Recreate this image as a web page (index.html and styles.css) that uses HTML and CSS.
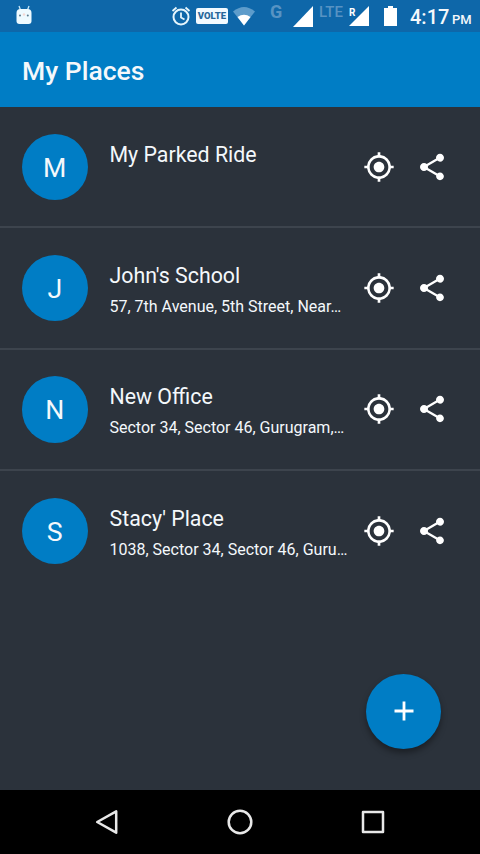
FILE: index.html
```html
<!DOCTYPE html>
<html lang="en">
<head>
<meta charset="utf-8">
<title>My Places</title>
<link rel="stylesheet" href="styles.css">
</head>
<body>
<svg class="defs" width="0" height="0">
  <symbol id="locate" viewBox="0 0 24 24"><path d="M12 8c-2.21 0-4 1.79-4 4s1.79 4 4 4 4-1.790 4-4-1.790-4-4-4zm8.940 3A8.994 8.994 0 0 0 13 3.060V1h-2v2.060A8.994 8.994 0 0 0 3.060 11H1v2h2.060A8.994 8.994 0 0 0 11 20.940V23h2v-2.060A8.994 8.994 0 0 0 20.940 13H23v-2h-2.060zM12 19c-3.870 0-7-3.130-7-7s3.130-7 7-7 7 3.130 7 7-3.130 7-7 7z"/></symbol>
  <symbol id="share" viewBox="0 0 24 24"><path d="M18 16.080c-.76 0-1.440.3-1.960.77L8.910 12.700c.05-.23.09-.46.09-.7s-.04-.47-.09-.7l7.050-4.110c.54.5 1.250.81 2.040.81 1.660 0 3-1.340 3-3s-1.340-3-3-3-3 1.340-3 3c0 .24.04.47.09.7L8.040 9.810C7.500 9.310 6.790 9 6 9c-1.660 0-3 1.340-3 3s1.340 3 3 3c.79 0 1.500-.31 2.040-.81l7.120 4.160c-.05.21-.08.43-.08.65 0 1.610 1.310 2.920 2.920 2.920s2.920-1.310 2.920-2.920-1.310-2.920-2.920-2.920z"/></symbol>
</svg>
<div class="screen">
  <div class="status">
    <svg class="robot" width="18" height="20" viewBox="0 0 18 20"><path d="M4 1l1.500 4M14 1l-1.500 4" stroke="#c4e6f7" stroke-width="1.300"/><path d="M1.500 8q0-4 4-4h7q4 0 4 4v8q0 3-3 3h-9q-3 0-3-3z" fill="#eefaff"/><circle cx="5" cy="10.500" r="1" fill="#58798c"/><circle cx="12.800" cy="10.500" r="1" fill="#58798c"/><circle cx="9" cy="9.500" r="1.200" fill="#f5d9d4"/></svg>
    <svg class="alarm" width="20" height="20" viewBox="0 0 20 20" fill="none" stroke="#e5f5fc" stroke-width="2"><circle cx="10" cy="11" r="7.500"/><path d="M1.500 5l4-3.500M18.500 5l-4-3.500M10 6.500v5l3.500 2" stroke-width="1.800"/></svg>
    <span class="volte">VOLTE</span>
    <svg class="wifi" width="24" height="20" viewBox="0 0 24 20"><path d="M1 5.500Q12-3.500 23 5.500L12 19.500z" fill="#5d9ccb"/><path d="M5.500 11Q12 6.500 18.500 11L12 19.500z" fill="#fff"/></svg>
    <span class="net net-g">G</span>
    <svg class="signal" width="20" height="21" viewBox="0 0 20 21"><path d="M20 0v21H0z" fill="#fff"/></svg>
    <span class="net net-lte">LTE</span>
    <span class="roam"><b>R</b><svg width="20" height="20" viewBox="0 0 20 20"><path d="M20 0v20H0z" fill="#fff"/></svg></span>
    <svg class="battery" width="13" height="20" viewBox="0 0 13 20"><path d="M4 0h5v2h4v18H0V2h4z" fill="#fff"/></svg>
    <div class="time"><span>4:17</span><small>PM</small></div>
  </div>
  <header class="bar"><h1>My Places</h1></header>
  <main class="list">
    <div class="row">
      <div class="avatar">M</div>
      <div class="info"><div class="name">My Parked Ride</div></div>
      <svg class="icon"><use href="#locate"/></svg><svg class="icon"><use href="#share"/></svg>
    </div>
    <div class="row">
      <div class="avatar">J</div>
      <div class="info"><div class="name">John's School</div><div class="address">57, 7th Avenue, 5th Street, Near…</div></div>
      <svg class="icon"><use href="#locate"/></svg><svg class="icon"><use href="#share"/></svg>
    </div>
    <div class="row">
      <div class="avatar">N</div>
      <div class="info"><div class="name">New Office</div><div class="address">Sector 34, Sector 46, Gurugram,…</div></div>
      <svg class="icon"><use href="#locate"/></svg><svg class="icon"><use href="#share"/></svg>
    </div>
    <div class="row">
      <div class="avatar">S</div>
      <div class="info"><div class="name">Stacy' Place</div><div class="address">1038, Sector 34, Sector 46, Guru…</div></div>
      <svg class="icon"><use href="#locate"/></svg><svg class="icon"><use href="#share"/></svg>
    </div>
    <button class="fab" aria-label="Add place"><svg width="20" height="20" viewBox="0 0 20 20"><path d="M10 .5v19M.5 10h19" stroke="#fff" stroke-width="2.800"/></svg></button>
  </main>
  <nav class="nav">
    <svg width="28" height="28" viewBox="0 0 28 28"><path d="M23.200 3.300v21.400L4.200 14z"/></svg>
    <svg width="28" height="28" viewBox="0 0 28 28"><circle cx="14" cy="14" r="11.300"/></svg>
    <svg width="28" height="28" viewBox="0 0 28 28"><path d="M4 4h20v20H4z"/></svg>
  </nav>
</div>
</body>
</html>
```
FILE: styles.css
```css
body { margin: 0; font-family: Roboto, sans-serif; color: #f4f8fb; background: #2b323b; }
.defs { position: absolute; }
.screen { display: flex; flex-direction: column; width: 480px; height: 854px; overflow: hidden; }
.status { display: flex; align-items: flex-start; height: 32px; background: #0e67a9; flex: none; }
.robot { margin: 5px 0 0 15px; }
.alarm { margin: 6px 0 0 138px; }
.volte { box-sizing: border-box; width: 32px; height: 16px; margin: 8px 0 0 5px; border-radius: 2px; background: #f2faff; color: #28689a; font-size: 9.500px; line-height: 16px; font-weight: 900; text-align: center; }
.wifi { margin: 6px 0 0 4px; }
.net { color: #5793c3; font-weight: 500; }
.net-g { width: 14px; margin: 3px 0 0 14px; font-size: 18px; line-height: 18px; font-weight: 700; }
.signal { margin: 6px 0 0 9px; }
.net-lte { width: 25px; margin: 4px 0 0 6px; font-size: 15px; line-height: 17px; font-weight: 500; }
.roam { position: relative; margin: 6px 0 0 5px; height: 20px; }
.roam svg { display: block; }
.roam b { position: absolute; left: 0; top: 1px; font-size: 10px; line-height: 12px; color: #fff; }
.battery { margin: 6px 0 0 15px; }
.time { display: flex; align-items: baseline; gap: 2.500px; margin: 5px 0 0 13px; font-size: 20px; line-height: 24px; font-weight: 500; white-space: nowrap; }
.time small { font-size: 13px; }
.bar { display: flex; align-items: center; height: 75px; padding: 0 22px; background: #007dc5; flex: none; }
.bar h1 { margin: 3px 0 0; font-size: 26.500px; line-height: 32px; font-weight: 500; }
.list { position: relative; flex: 1; background: #2b323b; }
.row { display: flex; align-items: flex-start; box-sizing: border-box; height: 121.400px; padding: 26.500px 32px 0 21.500px; border-bottom: 2px solid #3d444d; }
.row:nth-child(4) { border-bottom-color: transparent; }
.avatar { width: 66.500px; height: 66.500px; border-radius: 50%; background: #007dc5; font-size: 26.700px; line-height: 68.500px; text-align: center; flex: none; }
.info { width: 242px; margin: 8px 0 0 21.500px; white-space: nowrap; flex: none; }
.name { font-size: 21.330px; line-height: 26px; }
.address { margin-top: 8px; font-size: 16px; line-height: 20px; }
.icon { width: 32px; height: 32px; margin: 17px 0 0 11px; fill: #fff; flex: none; }
.icon + .icon { margin-left: 21px; }
.fab { position: absolute; right: 39px; bottom: 41.500px; display: grid; place-items: center; width: 75px; height: 75px; padding: 0; border: 0; border-radius: 50%; background: #007dc5; box-shadow: 0 4px 6px rgba(0, 0, 0, .38); }
.nav { display: flex; justify-content: space-between; align-items: center; height: 64px; padding: 0 93px; background: #000; flex: none; }
.nav svg { fill: none; stroke: #e8e8e8; stroke-width: 2.500; stroke-linejoin: round; }
```
